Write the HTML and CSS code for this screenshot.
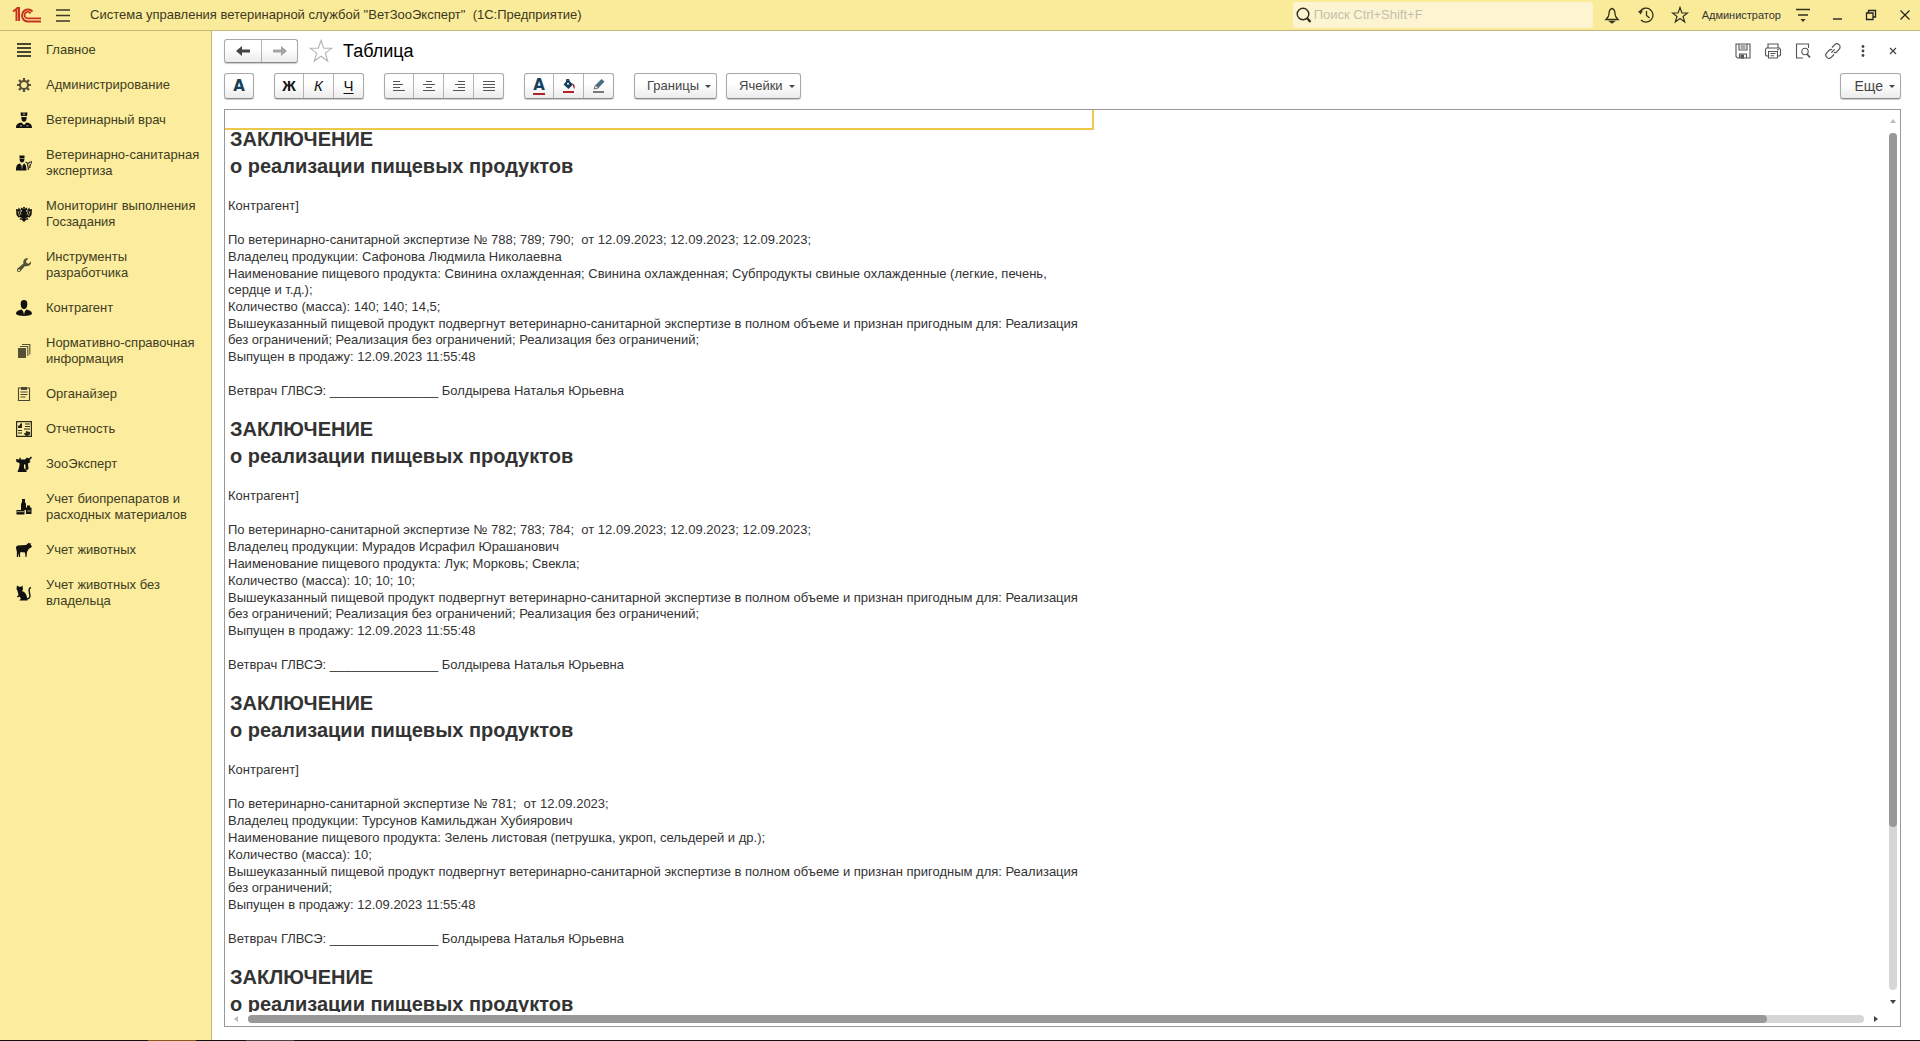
FILE: index.html
```html
<!DOCTYPE html>
<html lang="ru">
<head>
<meta charset="utf-8">
<title>Система управления ветеринарной службой "ВетЗооЭксперт"</title>
<link rel="stylesheet" href="styles.css">
</head>
<body>
<div class="app">
  <header class="titlebar">
    <svg class="logo" width="30" height="18" viewBox="0 0 30 18" fill="none" stroke="#c8321e" stroke-width="2"><path d="M1 5.500L4.500 3V15M7 15V2H4.500"/><path d="M20.500 5.500A6 6 0 1 0 15.500 15.500H29"/><path d="M18.500 7.500A3.200 3.200 0 1 0 15.500 12.300H29" stroke-width="1.800"/></svg>
    <button class="icon-btn burger" aria-label="Главное меню"><svg width="16" height="16" viewBox="0 0 16 16" stroke="#3c3820" stroke-width="1.300"><path d="M1 3H15M1 8.500H15M1 14H15"/></svg></button>
    <h1 class="app-title">Система управления ветеринарной службой "ВетЗооЭксперт"&nbsp; (1С:Предприятие)</h1>
    <label class="search">
      <svg width="16" height="18" viewBox="0 0 16 18" fill="none" stroke="#2c2a1c" stroke-width="1.400"><circle cx="7" cy="8" r="5.800"/><path d="M11 12L14.500 16" stroke-width="2.200"/></svg>
      <input type="text" placeholder="Поиск Ctrl+Shift+F" aria-label="Поиск">
    </label>
    <div class="title-tools">
      <button class="icon-btn" aria-label="Уведомления"><svg width="16" height="18" viewBox="0 0 16 18" fill="none" stroke="#33301c" stroke-width="1.300"><path d="M8 2.500C5.500 3 5 5 5 8C5 10 4 11.500 2 13.500H14C12 11.500 11 10 11 8C11 5 10.500 3 8 2.500Z"/><path d="M6 15.500H10L8 17Z" fill="#33301c"/></svg></button>
      <button class="icon-btn" aria-label="История"><svg width="18" height="18" viewBox="0 0 18 18" fill="none" stroke="#33301c" stroke-width="1.300"><path d="M3 5.500A7 7 0 1 1 4 14M9.500 5V9.500L12.500 12"/><path d="M1 5L6 4.500L3.500 8.500Z" fill="#33301c" stroke="none"/></svg></button>
      <button class="icon-btn" aria-label="Избранное"><svg width="18" height="18" viewBox="0 0 18 18" fill="none" stroke="#33301c" stroke-width="1.200"><path d="M9 1.500L10.900 7H16.500L12 10.400L13.700 16L9 12.600L4.300 16L6 10.400L1.500 7H7.100Z"/></svg></button>
      <button class="user">Администратор</button>
      <button class="icon-btn" aria-label="Сервис"><svg width="16" height="16" viewBox="0 0 16 16" stroke="#33301c" stroke-width="1.300"><path d="M1 2.500H15M3 8H13"/><path d="M5.500 12H10.500L8 15Z" fill="#33301c" stroke="none"/></svg></button>
    </div>
    <div class="window-tools">
      <button class="icon-btn" aria-label="Свернуть"><svg width="12" height="12" viewBox="0 0 12 12" stroke="#222" stroke-width="1.400"><path d="M2 10H11"/></svg></button>
      <button class="icon-btn" aria-label="Восстановить"><svg width="12" height="12" viewBox="0 0 12 12" fill="none" stroke="#222" stroke-width="1.300"><path d="M1.500 4H8V10.500H1.500ZM3.500 4V1.500H10.500V8H8"/></svg></button>
      <button class="icon-btn" aria-label="Закрыть"><svg width="12" height="12" viewBox="0 0 12 12" stroke="#222" stroke-width="1.200"><path d="M1.500 1.500L10.500 10.500M10.500 1.500L1.500 10.500"/></svg></button>
    </div>
  </header>

  <div class="workspace">
    <nav class="sidebar">
      <a href="#"><svg viewBox="0 0 16 16" stroke="#4a4530" stroke-width="1.800"><path d="M1 2H15M1 6H15M1 10H15M1 14H15"/></svg>Главное</a>
      <a href="#"><svg viewBox="0 0 16 16" fill="none" stroke="#555036"><circle cx="8" cy="8" r="4" stroke-width="2"/><path d="M8 1V4M8 12V15M1 8H4M12 8H15M3 3L5.200 5.200M10.800 10.800L13 13M13 3L10.800 5.200M5.200 10.800L3 13" stroke-width="2.200"/></svg>Администрирование</a>
      <a href="#"><svg viewBox="0 0 16 16" fill="#111"><path d="M4.500 0.500H11.500L11 4H5ZM5.300 5H10.700C10.700 8 9.800 9.800 8 9.800S5.300 8 5.300 5ZM0 16C0 12 2 11 5.500 10.500L8 13L10.500 10.500C14 11 16 12 16 16Z"/><path d="M7.500 1.200H8.500V3.200H7.500ZM4 13.500H6V14.300H4ZM10.500 13.500H12.500V14.300H10.500Z" fill="#fbec9e"/></svg>Ветеринарный врач</a>
      <a href="#"><svg viewBox="0 0 16 16" fill="#111"><path d="M3.500 0.500H8.500V3H3.500ZM3.500 3.500H8.500C8.500 6 7.500 7.500 6 7.500S3.500 6 3.500 3.500ZM0 15.500C0 10 1.500 8.800 4 8.500L6 11L8 8.500C9.500 9 10.300 10 10.500 15.500Z"/><path d="M9.500 7L12 8.500L14 7M15 6L15.500 8.500M11.500 9L12.500 15M14.500 9L13.500 13" fill="none" stroke="#332f20" stroke-width="1.300"/><path d="M5.500 10.500L6 15L6.600 10.500Z" fill="#fbec9e"/></svg>Ветеринарно-санитарная экспертиза</a>
      <a href="#"><svg viewBox="0 0 16 16" fill="#111"><path d="M7 1H9L8.500 3L10.500 1.500L11.500 3.500L10 4.500L10.500 6L13 1.500L14 3.500L16 3L15.500 9L13.500 11.500L11 11L12.500 14L10.500 13.500L8 16L5.500 13.500L3.500 14L5 11L2.500 11.500L0.500 9L0 3L2 3.500L3 1.500L5.500 6L6 4.500L4.500 3.500L5.500 1.500L7.500 3Z"/><path d="M2 5L3.500 10M14 5L12.500 10M4 5L5 9M12 5L11 9M5 11.500L6.500 13M11 11.500L9.500 13" stroke="#fbec9e" stroke-width=".6"/></svg>Мониторинг выполнения Госзадания</a>
      <a href="#"><svg viewBox="0 0 16 16" fill="#555036"><path d="M15 4.500L12.500 6.800L10.500 6L10 4L12.300 1.500C9.500 0.500 6.500 3 7.500 6.500L1.500 11.500C0 13.500 2 16 4 14.800L9 9C12.500 10 15.700 7.500 15 4.500ZM3 14.200A1 1 0 1 1 3 12.200A1 1 0 0 1 3 14.200Z"/></svg>Инструменты разработчика</a>
      <a href="#"><svg viewBox="0 0 16 16" fill="#111"><path d="M8 0C10.500 0 11.500 1.800 11.300 4.500C11 7.500 10 9 8 9S5 7.500 4.700 4.500C4.500 1.800 5.500 0 8 0ZM0 14C0 11 2.500 10.500 5.500 9.500L8 12L10.500 9.500C13.500 10.500 16 11 16 14C14 16.500 2 16.500 0 14Z"/><path d="M7.200 11L8 15L8.800 11Z" fill="#fbec9e"/></svg>Контрагент</a>
      <a href="#"><svg viewBox="0 0 16 16" fill="#555036"><path d="M2 5H10V15H2Z"/><path d="M4 3.500H11.800V13M6 1.500H13.800V11.500" fill="none" stroke="#555036" stroke-width="1.100"/></svg>Нормативно-справочная информация</a>
      <a href="#"><svg viewBox="0 0 16 16" fill="none" stroke="#4a4530" stroke-width="1.100"><path d="M5 2H2.500V14.500H13.500V2H11M4.500 6H11.500M4.500 8.500H11.500M4.500 11H9.500"/><path d="M5 1H11V4H5Z" fill="#4a4530" stroke="none"/></svg>Органайзер</a>
      <a href="#"><svg viewBox="0 0 16 16" fill="none" stroke="#2c2918" stroke-width="1.200"><path d="M0.600 0.600H15.400V15.400H0.600ZM9 3H14M9 5.500H14M2 9.500H6M2 12H6M8 8H14"/><path d="M2 7V5L4 4V3L6 2V7ZM10 10L14 11A2.500 2.500 0 1 1 8 12.500L10 11.500Z" fill="#2c2918" stroke="none"/></svg>Отчетность</a>
      <a href="#"><svg viewBox="0 0 16 16" fill="#111"><path d="M0 3L3 3.500L4 1L5 3.500H9L11 1.500L13 2.500L15 0.500L16 1.500L13.500 4.500L14.500 6L12 7.500L12.500 13L9.500 15L9.500 9L8 8V12L11 16H1.500C3 12 4 9 3.500 7L0.500 6Z"/></svg>ЗооЭксперт</a>
      <a href="#"><svg viewBox="0 0 16 16" fill="#111"><path d="M6 0H9V3L10 5V11H5V5L6 3ZM11 6.500H14V8.500H15.500V15H10V8.500H11ZM0.500 11H8.500V15.500H0.500Z"/><path d="M1 12.700H8M11.500 12H14.500" stroke="#fbec9e" stroke-width=".7"/></svg>Учет биопрепаратов и расходных материалов</a>
      <a href="#"><svg viewBox="0 0 16 16" fill="#111"><path d="M1.500 3.500L10 3L13 0.500L13.500 1.500H15.500L14.500 2.500L16 4.500L14.500 6L13 6.500L11 10L10.500 15H9.500L9 10.500L4.500 10L4 12L4.200 15H3L2.500 11L2 15H0.800L1 6L0 10V5Z"/></svg>Учет животных</a>
      <a href="#"><svg viewBox="0 0 16 16" fill="#111"><path d="M1 0.500L3 1.800H5L6.500 0.500L7 4.500L6 6C9 7 11 9 11.500 15.500H3.500L4 14.500L5 14L3.500 11.500L1.500 12.500L1 11.500L2.500 10L1.500 6L0.500 4Z"/><path d="M11 14C15 13.500 14 10 13.500 8S12.500 3 15 2.500" fill="none" stroke="#111" stroke-width="1.400"/></svg>Учет животных без владельца</a>
    </nav>

    <main class="content">
      <div class="page-head">
        <div class="group nav-group">
          <button aria-label="Назад"><svg width="16" height="12" viewBox="0 0 16 12" fill="#444"><path d="M1 6L7 1V4.500H15V7.500H7V11Z"/></svg></button>
          <button aria-label="Вперед"><svg width="16" height="12" viewBox="0 0 16 12" fill="#a4a4a4"><path d="M15 6L9 1V4.500H1V7.500H9V11Z"/></svg></button>
        </div>
        <button class="icon-btn fav" aria-label="В избранное"><svg width="24" height="24" viewBox="0 0 24 24" fill="none" stroke="#b4b4b4" stroke-width="1.100"><path d="M12 1.500L14.700 9.300H22.800L16.300 14.100L18.700 22L12 17.200L5.300 22L7.700 14.100L1.200 9.300H9.300Z"/></svg></button>
        <h2 class="page-title">Таблица</h2>
        <div class="page-tools">
          <button class="icon-btn" aria-label="Сохранить"><svg width="16" height="16" viewBox="0 0 16 16" fill="none" stroke="#555" stroke-width="1.100"><path d="M1 1H15V15H2.500L1 13.500ZM4 1V7H12V1M5.500 3H10.500M5.500 5H10.500M4.500 15V11H11.500V15"/><path d="M6 12H8.500V15H6Z" fill="#555"/></svg></button>
          <button class="icon-btn" aria-label="Печать"><svg width="18" height="16" viewBox="0 0 18 16" fill="none" stroke="#555" stroke-width="1.100"><path d="M4 5V1H14V5M4 13H2.500L1.500 12V6.500L2.500 5H15.500L16.500 6.500V12L15.500 13H14M4.500 8.500H13.500V15H4.500ZM6.500 10.500H11.500M6.500 12.700H10M13 6.800H15"/></svg></button>
          <button class="icon-btn" aria-label="Предварительный просмотр"><svg width="16" height="16" viewBox="0 0 16 16" fill="none" stroke="#555" stroke-width="1.100"><path d="M8 15H1.500V1H13.500V5"/><circle cx="10" cy="8.500" r="3.200"/><path d="M12 11L15 14.500" stroke-width="1.800"/></svg></button>
          <button class="icon-btn" aria-label="Ссылка"><svg width="16" height="16" viewBox="0 0 16 16" fill="none" stroke="#555" stroke-width="1.200"><path d="M7 4.500L9.500 1.800A2.900 2.900 0 0 1 14.200 6.200L11.500 9C10.700 9.800 9.500 9.800 8.800 9.300M9 11.500L6.500 14.200A2.900 2.900 0 0 1 1.800 9.800L4.500 7C5.300 6.200 6.500 6.200 7.200 6.700M6.300 9.700L9.700 6.300"/></svg></button>
          <button class="icon-btn" aria-label="Другие действия"><svg width="16" height="16" viewBox="0 0 16 16" fill="#444"><circle cx="8" cy="3.500" r="1.400"/><circle cx="8" cy="8" r="1.400"/><circle cx="8" cy="12.500" r="1.400"/></svg></button>
          <button class="icon-btn" aria-label="Закрыть вкладку"><svg width="16" height="16" viewBox="0 0 16 16" stroke="#444" stroke-width="1.200"><path d="M5 5L11 11M11 5L5 11"/></svg></button>
        </div>
      </div>

      <div class="toolbar">
        <div class="group"><button class="blue">А</button></div>
        <div class="group"><button class="bold">Ж</button><button class="italic">К</button><button class="under">Ч</button></div>
        <div class="group">
          <button aria-label="По левому краю"><svg width="14" height="14" viewBox="0 0 14 14" stroke="#555"><path d="M1 2.500H8M1 5.500H11M1 8.500H8M1 11.500H13"/></svg></button>
          <button aria-label="По центру"><svg width="14" height="14" viewBox="0 0 14 14" stroke="#555"><path d="M4 2.500H10M1 5.500H13M4 8.500H10M1 11.500H13"/></svg></button>
          <button aria-label="По правому краю"><svg width="14" height="14" viewBox="0 0 14 14" stroke="#555"><path d="M6 2.500H13M3 5.500H13M6 8.500H13M1 11.500H13"/></svg></button>
          <button aria-label="По ширине"><svg width="14" height="14" viewBox="0 0 14 14" stroke="#555"><path d="M1 2.500H13M1 5.500H13M1 8.500H13M1 11.500H13"/></svg></button>
        </div>
        <div class="group">
          <button class="textcolor"><span>А</span></button>
          <button aria-label="Цвет фона"><svg width="14" height="16" viewBox="0 0 14 16"><path d="M6 1.500L11 6.500L6.500 11L1.500 6.500Z" fill="#163f5c"/><path d="M4.500 5V1.500H7V5" fill="none" stroke="#163f5c"/><circle cx="6" cy="5.800" r="1" fill="#fff"/><path d="M10 5.500C13 6 13 8 12.500 11C11 10 11.500 8 10 5.500Z" fill="#b3212c"/><path d="M1 13H12V15H1Z" fill="#b3212c"/></svg></button>
          <button aria-label="Цвет рамки"><svg width="14" height="16" viewBox="0 0 14 16"><path d="M2 11L3.500 7L9.500 1L12.500 3.500L6.500 10Z" fill="#496d84"/><path d="M2 11L3.500 7L6.500 10Z" fill="#e8e4d8" stroke="#555" stroke-width=".7"/><path d="M1 13H12V15H1Z" fill="#777"/></svg></button>
        </div>
        <button class="drop">Границы<i class="caret"></i></button>
        <button class="drop cells">Ячейки<i class="caret"></i></button>
        <button class="drop more">Еще<i class="caret"></i></button>
      </div>

      <section class="sheet">
        <div class="doc">
          <div class="selected-cell"></div>
          <article class="act">
            <h3>ЗАКЛЮЧЕНИЕ<br>о реализации пищевых продуктов</h3>
            <p class="gap">Контрагент]</p>
            <p>По ветеринарно-санитарной экспертизе № 788; 789; 790;&nbsp; от 12.09.2023; 12.09.2023; 12.09.2023;</p>
            <p>Владелец продукции: Сафонова Людмила Николаевна</p>
            <p>Наименование пищевого продукта: Свинина охлажденная; Свинина охлажденная; Субпродукты свиные охлажденные (легкие, печень, сердце и т.д.);</p>
            <p>Количество (масса): 140; 140; 14,5;</p>
            <p>Вышеуказанный пищевой продукт подвергнут ветеринарно-санитарной экспертизе в полном объеме и признан пригодным для: Реализация без ограничений; Реализация без ограничений; Реализация без ограничений;</p>
            <p class="gap">Выпущен в продажу: 12.09.2023 11:55:48</p>
            <p class="gap">Ветврач ГЛВСЭ: _______________ Болдырева Наталья Юрьевна</p>
          </article>
          <article class="act">
            <h3>ЗАКЛЮЧЕНИЕ<br>о реализации пищевых продуктов</h3>
            <p class="gap">Контрагент]</p>
            <p>По ветеринарно-санитарной экспертизе № 782; 783; 784;&nbsp; от 12.09.2023; 12.09.2023; 12.09.2023;</p>
            <p>Владелец продукции: Мурадов Исрафил Юрашанович</p>
            <p>Наименование пищевого продукта: Лук; Морковь; Свекла;</p>
            <p>Количество (масса): 10; 10; 10;</p>
            <p>Вышеуказанный пищевой продукт подвергнут ветеринарно-санитарной экспертизе в полном объеме и признан пригодным для: Реализация без ограничений; Реализация без ограничений; Реализация без ограничений;</p>
            <p class="gap">Выпущен в продажу: 12.09.2023 11:55:48</p>
            <p class="gap">Ветврач ГЛВСЭ: _______________ Болдырева Наталья Юрьевна</p>
          </article>
          <article class="act">
            <h3>ЗАКЛЮЧЕНИЕ<br>о реализации пищевых продуктов</h3>
            <p class="gap">Контрагент]</p>
            <p>По ветеринарно-санитарной экспертизе № 781;&nbsp; от 12.09.2023;</p>
            <p>Владелец продукции: Турсунов Камильджан Хубиярович</p>
            <p>Наименование пищевого продукта: Зелень листовая (петрушка, укроп, сельдерей и др.);</p>
            <p>Количество (масса): 10;</p>
            <p>Вышеуказанный пищевой продукт подвергнут ветеринарно-санитарной экспертизе в полном объеме и признан пригодным для: Реализация без ограничений;</p>
            <p class="gap">Выпущен в продажу: 12.09.2023 11:55:48</p>
            <p class="gap">Ветврач ГЛВСЭ: _______________ Болдырева Наталья Юрьевна</p>
          </article>
          <article class="act">
            <h3>ЗАКЛЮЧЕНИЕ<br>о реализации пищевых продуктов</h3>
          </article>
        </div>
        <div class="vbar"><i class="arrow up"></i><div class="track"><div class="thumb"></div></div><i class="arrow down"></i></div>
        <div class="hbar"><i class="arrow left"></i><div class="track"><div class="thumb"></div></div><i class="arrow right"></i></div>
      </section>
    </main>
  </div>
  <div class="taskbar"></div>
</div>
</body>
</html>
```
FILE: styles.css
```css
* { box-sizing: border-box; }
body {
  margin: 0;
  font-family: "Liberation Sans", Arial, sans-serif;
  font-size: 13px;
  line-height: 16px;
  color: #333;
  background: #fff;
}
h1, h2, h3, p { margin: 0; font-weight: normal; }
button { font: inherit; color: inherit; cursor: pointer; }
svg { display: block; }

.app { display: grid; grid-template-rows: 31px minmax(0, 1fr) 1px; height: 100vh; }

.titlebar {
  display: flex;
  align-items: center;
  padding: 0 3px 0 12px;
  background: #faeb9a;
  border-bottom: 1px solid #c3b777;
}
.icon-btn {
  display: grid;
  place-items: center;
  padding: 0;
  border: 0;
  background: none;
}
.burger { margin: 0 19px 0 13px; }
.app-title { flex: 1; font-size: 13px; color: #3c3820; white-space: nowrap; }
.search {
  display: flex;
  align-items: center;
  gap: 2px;
  width: 300px;
  height: 26px;
  padding-left: 3px;
  border-radius: 3px;
  background: #fdf5d2;
}
.search input {
  flex: 1;
  min-width: 0;
  padding: 0;
  border: 0;
  outline: 0;
  background: none;
  font: inherit;
  font-size: 13px;
}
.search input::placeholder { color: #c4bfaa; }
.title-tools { display: flex; align-items: center; margin-left: 2px; }
.title-tools .icon-btn { width: 34px; height: 30px; }
.user { padding: 0 5px; border: 0; background: none; font-size: 11px; white-space: nowrap; }
.window-tools { display: flex; }
.window-tools .icon-btn { width: 34px; height: 30px; }
.window-tools .icon-btn:last-child { width: 24px; margin-left: 5px; }

.workspace { display: grid; grid-template-columns: 212px minmax(0, 1fr); min-height: 0; }

.sidebar { padding-top: 1px; background: #fbec9e; border-right: 1px solid #c3b777; }
.sidebar a {
  display: grid;
  grid-template-columns: 16px 1fr;
  align-items: center;
  gap: 14px;
  padding: 10px 8px 9px 16px;
  color: #413c22;
  text-decoration: none;
}

.content { display: flex; flex-direction: column; min-height: 0; padding: 8px 19px 13px 12px; }

.page-head { display: flex; align-items: center; height: 24px; }
.group {
  display: flex;
  border: 1px solid #a8a8a8;
  border-bottom-color: #8a8a8a;
  border-radius: 3px;
  background: linear-gradient(#fff 40%, #ececec);
  box-shadow: 0 1px 1px #ccc;
}
.group button {
  display: grid;
  place-items: center;
  width: 30px;
  height: 24px;
  padding: 0;
  border: 0;
  border-left: 1px solid #b4b4b4;
  background: none;
  font-size: 15px;
  color: #111;
}
.group button:first-child { width: 28px; border-left: 0; }
.nav-group button, .nav-group button:first-child { width: 36px; height: 22px; }
.fav { margin: 0 10px 0 11px; }
.page-title { font-size: 18px; line-height: 24px; color: #000; }
.page-tools { display: flex; margin-left: auto; }
.page-tools .icon-btn { width: 30px; height: 24px; }
.page-tools .icon-btn:last-child { margin-right: -7px; }

.toolbar { display: flex; gap: 20px; margin: 10px 0; }
.group .blue, .textcolor span {
  font-family: "DejaVu Sans", sans-serif;
  font-weight: bold;
  color: #163f5c;
}
.group .bold { font-weight: bold; }
.group .italic { font-style: italic; }
.group .under { text-decoration: underline; text-underline-offset: 2px; }
.textcolor span { height: 17px; border-bottom: 2px solid #b3212c; line-height: 15px; }
.drop {
  display: flex;
  align-items: center;
  justify-content: flex-end;
  gap: 6px;
  height: 26px;
  padding: 0 5px 0 12px;
  border: 1px solid #a8a8a8;
  border-bottom-color: #8a8a8a;
  border-radius: 3px;
  background: linear-gradient(#fff 40%, #ececec);
  box-shadow: 0 1px 1px #ccc;
  color: #444;
}
.cells { margin-left: -11px; }
.more { min-width: 61px; margin-left: auto; font-size: 14px; }
.caret { border: 3px solid transparent; border-top-color: #444; border-bottom: 0; }

.sheet {
  flex: 1;
  display: grid;
  grid-template: minmax(0, 1fr) 14px / minmax(0, 1fr) 14px;
  min-height: 0;
  border: 1px solid #999;
}
.doc { overflow: hidden; }
.selected-cell {
  width: 869px;
  height: 20px;
  margin-bottom: -4px;
  border: solid #ecc94b;
  border-width: 0 2px 2px 0;
}
.act { width: 862px; padding-left: 3px; }
.act h3 {
  margin-bottom: 18px;
  padding-left: 2px;
  font-size: 20px;
  line-height: 27px;
  font-weight: bold;
}
.act p { padding-bottom: 1px; }
.act .gap { margin-bottom: 17px; }
.act .gap:last-child { margin-bottom: 16px; }

.vbar, .hbar { display: flex; align-items: center; }
.vbar { flex-direction: column; grid-row: 1; grid-column: 2; padding: 9px 0 8px; gap: 10px; }
.hbar { grid-row: 2; grid-column: 1; padding: 0 8px 0 9px; gap: 10px; }
.track { flex: 1; border-radius: 4px; background: #d6d6d6; }
.vbar .track { width: 8px; }
.hbar .track { height: 8px; }
.thumb { border-radius: 4px; background: #999; }
.vbar .thumb { width: 8px; height: 81%; }
.hbar .thumb { width: 94%; height: 8px; }
.arrow { border: 3px solid transparent; }
.up { border-top: 0; border-bottom: 4px solid #bbb; }
.down { border-bottom: 0; border-top: 4px solid #444; }
.left { border-left: 0; border-right: 4px solid #bbb; }
.right { border-right: 0; border-left: 4px solid #444; }

.taskbar { background: linear-gradient(90deg, #111 148px, #8a5a1c 148px 196px, #111 196px 246px, #444 246px 294px, #111 294px); }
```
